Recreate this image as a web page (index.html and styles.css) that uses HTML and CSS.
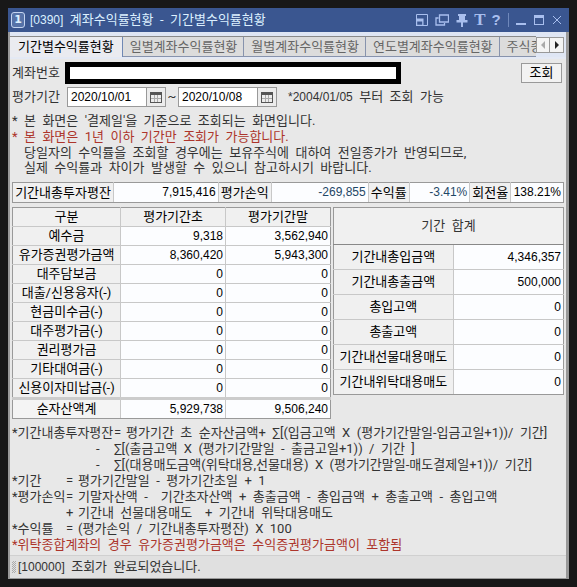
FILE: index.html
```html
<!DOCTYPE html>
<html lang="ko">
<head>
<meta charset="utf-8">
<meta name="viewport" content="width=device-width, initial-scale=1">
<title>[0390] 계좌수익률현황 - 기간별수익률현황</title>
<link rel="stylesheet" href="styles.css">
</head>
<body>
<main class="window">
  <header class="titlebar">
    <span class="badge">1</span>
    <h1 class="title"><span class="num">[0390]</span>  계좌수익률현황  -  기간별수익률현황</h1>
    <div class="tools">
      <button class="tool tool-wide" type="button" aria-label="창 크기"><svg width="12" height="12" viewBox="0 0 12 12"><path d="M.5 5V.5h11v11H7" fill="none" stroke="currentColor"/><path d="M0 4.500h7.500V12H0zM1.200 7.500v3.300h5V7.500z" fill="currentColor" fill-rule="evenodd"/></svg></button>
      <button class="tool tool-wide" type="button" aria-label="창 복사"><svg width="14" height="12" viewBox="0 0 14 12"><path d="M4.500 1h9v7h-9zM3.500 4H1v7h8.500V9" fill="none" stroke="currentColor" stroke-width="1.300"/></svg></button>
      <button class="tool tool-wide" type="button" aria-label="고정"><svg width="12" height="13" viewBox="0 0 12 13"><path d="M2 0h8v2H9v4h2.500v2.500H7V13H5V8.500H.5V6H3V2H2z" fill="currentColor"/></svg></button>
      <button class="tool tool-text" type="button" aria-label="글꼴">T</button>
      <button class="tool tool-text tool-help" type="button" aria-label="도움말">?</button>
      <span class="divider"></span>
      <button class="tool" type="button" aria-label="최소화"><svg width="10" height="12" viewBox="0 0 10 12"><path d="M0 9h10v2H0z" fill="currentColor"/></svg></button>
      <button class="tool" type="button" aria-label="최대화"><svg width="10" height="10" viewBox="0 0 10 10"><path d="M0 0h10v10H0zM1 3v6h8V3z" fill="currentColor" fill-rule="evenodd"/></svg></button>
      <button class="tool" type="button" aria-label="닫기"><svg width="10" height="10" viewBox="0 0 10 10"><path d="M1 1l8 8M9 1l-8 8" fill="none" stroke="currentColor"/></svg></button>
    </div>
  </header>

  <nav class="tabbar">
    <div class="tabs">
      <button class="tab tab-active" type="button">기간별수익률현황</button>
      <button class="tab" type="button">일별계좌수익률현황</button>
      <button class="tab" type="button">월별계좌수익률현황</button>
      <button class="tab" type="button">연도별계좌수익률현황</button>
      <button class="tab" type="button">주식종</button>
    </div>
    <button class="arrow arrow-off" type="button" aria-label="이전 탭"><svg width="4" height="8" viewBox="0 0 4 8"><path d="M4 0v8L0 4z" fill="currentColor"/></svg></button>
    <button class="arrow" type="button" aria-label="다음 탭"><svg width="4" height="8" viewBox="0 0 4 8"><path d="M0 0v8l4-4z" fill="currentColor"/></svg></button>
  </nav>

  <section class="content">
    <form class="query">
      <div class="row">
        <label class="caption" for="account">계좌번호</label>
        <input class="account" id="account" type="text">
        <button class="submit" type="button">조회</button>
      </div>
      <div class="row">
        <label class="caption" for="from">평가기간</label>
        <span class="date"><input class="date-input" id="from" type="text" value="2020/10/01"><button class="date-button" type="button" aria-label="시작일 달력"><svg width="12" height="11" viewBox="0 0 12 11"><path d="M0 0h12v11H0zM1 3v7h10V3z" fill="#555" fill-rule="evenodd"/><path d="M4.500 3v7M7.500 3v7M1 6.500h10" stroke="#aaa"/></svg></button></span>
        <label class="tilde" for="to">~</label>
        <span class="date"><input class="date-input" id="to" type="text" value="2020/10/08"><button class="date-button" type="button" aria-label="종료일 달력"><svg width="12" height="11" viewBox="0 0 12 11"><path d="M0 0h12v11H0zM1 3v7h10V3z" fill="#555" fill-rule="evenodd"/><path d="M4.500 3v7M7.500 3v7M1 6.500h10" stroke="#aaa"/></svg></button></span>
        <span class="hint"><span class="num">*2004/01/05</span>  부터  조회  가능</span>
      </div>
    </form>

    <ul class="notes">
      <li><span class="mark">*</span>본  화면은  '결제일'을  기준으로  조회되는  화면입니다.</li>
      <li class="red"><span class="mark">*</span>본  화면은  1년  이하  기간만  조회가  가능합니다.</li>
      <li class="more">당일자의  수익률을  조회할  경우에는  보유주식에  대하여  전일종가가  반영되므로,<br>실제  수익률과  차이가  발생할  수  있으니  참고하시기  바랍니다.</li>
    </ul>

    <table class="grid summary">
      <colgroup><col class="s1"><col class="s2"><col class="s3"><col class="s4"><col class="s5"><col class="s6"><col class="s7"><col></colgroup>
      <tr><th>기간내총투자평잔</th><td>7,915,416</td><th>평가손익</th><td class="minus">-269,855</td><th>수익률</th><td class="minus">-3.41%</td><th>회전율</th><td>138.21%</td></tr>
    </table>

    <div class="panels">
      <table class="grid assets">
        <colgroup><col class="a1"><col class="a2"><col></colgroup>
        <thead><tr><th>구분</th><th>평가기간초</th><th>평가기간말</th></tr></thead>
        <tbody>
          <tr><th>예수금</th><td>9,318</td><td>3,562,940</td></tr>
          <tr><th>유가증권평가금액</th><td>8,360,420</td><td>5,943,300</td></tr>
          <tr><th>대주담보금</th><td>0</td><td>0</td></tr>
          <tr><th>대출/신용융자(-)</th><td>0</td><td>0</td></tr>
          <tr><th>현금미수금(-)</th><td>0</td><td>0</td></tr>
          <tr><th>대주평가금(-)</th><td>0</td><td>0</td></tr>
          <tr><th>권리평가금</th><td>0</td><td>0</td></tr>
          <tr><th>기타대여금(-)</th><td>0</td><td>0</td></tr>
          <tr><th>신용이자미납금(-)</th><td>0</td><td>0</td></tr>
        </tbody>
        <tfoot><tr><th>순자산액계</th><td>5,929,738</td><td>9,506,240</td></tr></tfoot>
      </table>
      <table class="grid totals">
        <colgroup><col class="t1"><col></colgroup>
        <thead><tr><th colspan="2">기간  합계</th></tr></thead>
        <tbody>
          <tr><th>기간내총입금액</th><td>4,346,357</td></tr>
          <tr><th>기간내총출금액</th><td>500,000</td></tr>
          <tr><th>총입고액</th><td>0</td></tr>
          <tr><th>총출고액</th><td>0</td></tr>
          <tr><th>기간내선물대용매도</th><td>0</td></tr>
          <tr><th>기간내위탁대용매도</th><td>0</td></tr>
        </tbody>
      </table>
    </div>

    <div class="formulas">
      <div class="formula balance"><span>*기간내총투자평잔</span><span>=</span><span>평가기간  초  순자산금액+  ∑[(입금고액  X  (평가기간말일-입금고일+1))/  기간]</span></div>
      <div class="formula sigma"><span>-</span><span>∑[(출금고액  X  (평가기간말일  -  출금고일+1))  /  기간  ]</span></div>
      <div class="formula sigma"><span>-</span><span>∑[(대용매도금액(위탁대용,선물대용)  X  (평가기간말일-매도결제일+1))/  기간]</span></div>
      <div class="formula"><span>*기간</span><span>=</span><span>평가기간말일  -  평가기간초일  +  1</span></div>
      <div class="formula"><span>*평가손익</span><span>=</span><span>기말자산액  -    기간초자산액  +  총출금액  -  총입금액  +  총출고액  -  총입고액</span></div>
      <div class="formula"><span></span><span>+</span><span>기간내  선물대용매도    +  기간내  위탁대용매도</span></div>
      <div class="formula"><span>*수익률</span><span>=</span><span>(평가손익  /  기간내총투자평잔)  X  100</span></div>
      <p class="red">*위탁종합계좌의  경우  유가증권평가금액은  수익증권평가금액이  포함됨</p>
    </div>
  </section>

  <footer class="status"><span class="grip"></span><span class="num">[100000]</span>  조회가  완료되었습니다.</footer>
</main>
</body>
</html>
```
FILE: styles.css
```css
* { box-sizing: border-box; }

body {
  margin: 0;
  padding: 8px;
  background: #181818;
  color: #333;
  font: 13px/16px Roboto, "Noto Sans CJK KR", sans-serif;
}

button, input { font: inherit; color: inherit; margin: 0; padding: 0; border-radius: 0; }
h1, p, ul { margin: 0; padding: 0; font: inherit; list-style: none; }

.num, .date-input, .grid td { font-family: "Liberation Sans", sans-serif; font-size: 12px; }

.window {
  background: #e8e8e8;
  border: solid #999;
  border-width: 0 3px 1px 2px;
}

/* Title bar */
.titlebar {
  display: flex;
  align-items: center;
  height: 24px;
  margin: 0 -3px 0 -2px;
  padding: 0 3px;
  background: #3a5690;
  color: #dcf0ff;
}
.badge {
  width: 14px;
  height: 16px;
  border: 1px solid #c4d4f0;
  border-radius: 3px;
  background: #5672a8;
  font: bold 11px/14px "DejaVu Sans", sans-serif;
  text-align: center;
}
.title { flex: 1; margin-left: 5px; white-space: pre; }
.tools { display: flex; align-items: center; color: #a9bfee; }
.tool {
  display: flex;
  align-items: center;
  justify-content: center;
  width: 18px;
  height: 20px;
  border: 0;
  background: none;
}
.tool-wide { width: 20px; }
.tool-text { width: 16px; font: bold 17px/20px "Liberation Serif", serif; }
.tool-help { font-family: "Liberation Sans", sans-serif; font-size: 15px; }
.divider { width: 1px; height: 14px; margin: 0 3px 0 4px; background: #6f88bb; }

/* Tabs */
.tabbar {
  display: flex;
  height: 27px;
  padding: 4px 2px 0 0;
  background: linear-gradient(#dfe6f4 25px, #e4e9f4 25px);
}
.tabs {
  display: flex;
  flex: 1;
  height: 21px;
  overflow: hidden;
  border-top: 1px solid #8a8a8a;
  background: #dcdcdc;
}
.tab {
  flex: none;
  padding: 0 6px 0 7px;
  border: solid #8793ad;
  border-width: 0 1px 1px 0;
  background: #dcdcdc;
  color: #666;
}
.tab-active {
  padding: 0 8px;
  border-color: #6f88b4;
  border-width: 0 1px 0 0;
  background: #eaebf0;
  color: #000;
}
.arrow {
  display: flex;
  align-items: center;
  justify-content: center;
  width: 14px;
  height: 16px;
  margin-top: 1px;
  border: 1px solid #999;
  background: #f4f4f4;
  color: #222;
}
.arrow + .arrow { border-left: 0; }
.arrow-off { color: #aaa; }

/* Query form */
.content { padding: 0 2px; }
.query { padding-top: 3px; }
.row { display: flex; align-items: center; height: 22px; }
.row + .row { margin-top: 2px; }
.caption { flex: none; width: 55px; }
.account { flex: 0 1 336px; min-width: 0; height: 22px; margin-left: -2px; border: 5px solid #000; background: #fff; }
.submit { width: 41px; height: 20px; margin: 0 2px 0 auto; border: 1px solid #999; background: #f2f2f2; color: #000; }
.date { display: flex; width: 99px; height: 20px; border: 1px solid #999; background: #fff; color: #000; }
.date-input { flex: 1; min-width: 0; padding-left: 3px; border: 0; background: none; }
.date-button {
  display: flex;
  align-items: center;
  justify-content: center;
  width: 19px;
  border: 0;
  border-left: 1px solid #999;
  background: #ececec;
}
.tilde { width: 12px; text-align: center; }
.hint { margin-left: 11px; white-space: pre; }

/* Notes */
.notes { padding: 5px 0 7px; }
.notes li { white-space: pre; }
.mark { display: inline-block; width: 12px; }
.notes .more { padding-left: 12px; line-height: 15px; }
.red { color: #ad352b; }

/* Data grids */
.grid {
  width: 100%;
  border-collapse: collapse;
  table-layout: fixed;
  color: #000;
  line-height: 18px;
}
.grid th, .grid td { padding: 0; border: 1px solid #c8c8c8; white-space: pre; }
.grid th { background: #f0f0f0; font-weight: normal; text-align: center; }
.grid td { padding-right: 2px; background: #fcfdff; text-align: right; }
.grid tr > :first-child { border-left-color: #999; }
.grid tr > :last-child { border-right-color: #999; }
.grid > :nth-child(2) > tr:first-child > * { border-top-color: #999; }
.grid > :last-child > tr:last-child > * { border-bottom-color: #999; }
.grid .minus { color: #1f4766; }
.summary { line-height: 19px; }
.s1 { width: 101px; }
.s2 { width: 19%; }
.s3 { width: 53px; }
.s4 { width: 97px; }
.s5 { width: 41px; }
.s6 { width: 11%; }
.s7 { width: 41px; }

.panels { display: grid; grid-template-columns: 319fr 231fr; gap: 2px; align-items: start; margin-top: 4px; }
.a1 { width: 34%; }
.a2 { width: 33%; }
.assets tfoot th, .assets tfoot td { border-top: 3px solid #ccc; }
.assets tfoot th { background: #f4f4f4; }
.t1 { width: 52%; }
.totals { line-height: 24px; }
.totals thead th { border-bottom-color: #888; color: #333; line-height: 36px; }

/* Formulas */
.formulas { padding: 6px 0 2px; }
.formula { display: grid; grid-template-columns: 54px 12px 1fr; }
.formula span, .formulas p { white-space: pre; }
.balance { grid-template-columns: 102px 12px 1fr; }
.sigma { grid-template-columns: 18px 1fr; padding-left: 84px; }

/* Status bar */
.status {
  display: flex;
  align-items: center;
  height: 23px;
  padding-left: 2px;
  border-top: 1px solid #d0d0d0;
  background: #e0e0e0;
  white-space: pre;
}
.grip {
  width: 4px;
  height: 12px;
  margin-right: 2px;
  background: repeating-conic-gradient(#aaa 0 25%, #e0e0e0 0 50%) 0 0 / 2px 2px;
}
```
